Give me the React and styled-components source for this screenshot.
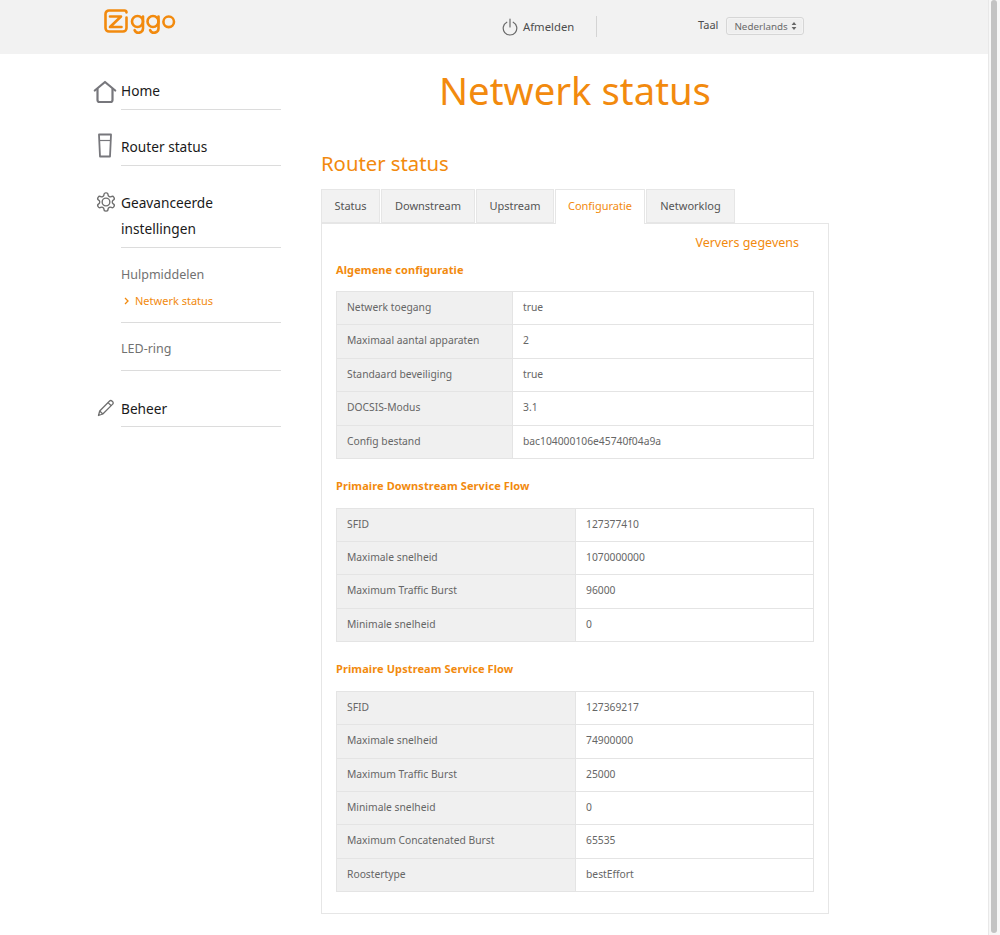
import React from "react";
import styled, { createGlobalStyle } from "styled-components";

const ORANGE = "#f28a0e";

const GlobalStyle = createGlobalStyle`
	html, body {
		margin: 0;
		padding: 0;
		background: #fff;
		overflow: hidden;
	}
	body {
		font-family: "Noto Sans", "Open Sans", sans-serif;
		color: #5a5a5a;
	}
`;

const Page = styled.div`
	position: relative;
	width: 1000px;
	height: 935px;
	overflow: hidden;
`;

const ScrollTrack = styled.div`
	position: absolute;
	top: 0;
	right: 0;
	width: 12px;
	height: 935px;
	background: #f7f7f7;
	border-left: 1px solid #e8e8e8;
	box-sizing: border-box;
`;

const ScrollThumb = styled.div`
	width: 6px;
	height: 933px;
	margin-left: 2px;
	border-radius: 3px;
	background: #c3c3c3;
`;

const Header = styled.header`
	display: flex;
	align-items: flex-start;
	height: 54px;
	background: #f2f2f2;
	padding-left: 104px;
`;

const LogoWrap = styled.div`
	width: 72px;
	height: 26px;
	margin-top: 9px;
`;

const LogoutGroup = styled.div`
	display: flex;
	align-items: center;
	margin-left: 326px;
	margin-top: 16px;
	height: 21px;
	width: 94px;
	border-right: 1px solid #d4d4d4;
	font-size: 11.3px;
	color: #4d4d4d;
	gap: 5px;
`;

const LangGroup = styled.div`
	display: flex;
	align-items: center;
	margin-left: 101px;
	margin-top: 17px;
	font-size: 11px;
	color: #4d4d4d;
	gap: 8px;
	height: 18px;
`;

const LangLabel = styled.span`
	margin-top: -3px;
`;

const LangSelect = styled.div`
	display: flex;
	align-items: center;
	justify-content: space-between;
	width: 78px;
	height: 18px;
	box-sizing: border-box;
	padding: 0 6px 0 7px;
	border: 1px solid #d6d6d6;
	border-radius: 3px;
	background: #efefef;
	box-shadow: inset 0 0 2px #fff;
	font-size: 9.8px;
	color: #6a6a6a;
`;

const Body = styled.div`
	display: flex;
	align-items: flex-start;
`;

const Sidebar = styled.nav`
	width: 188px;
	margin-left: 93px;
	padding-top: 23px;
`;

const NavItem = styled.div`
	display: flex;
	margin-bottom: ${(p) => p.$gap || 0}px;
	margin-top: ${(p) => p.$top || 0}px;
`;

const NavIcon = styled.div`
	width: 28px;
	flex-shrink: 0;
	box-sizing: border-box;
	padding: ${(p) => p.$y}px 0 0 ${(p) => p.$x}px;
	line-height: 0;
`;

const NavBody = styled.div`
	flex: 1;
	border-bottom: 1px solid #dcdcdc;
	font-size: 13.7px;
	line-height: 26px;
	color: #1a1a1a;
	padding: 1px 0 ${(p) => p.$bottom ?? 5}px;
`;

const SubItem = styled.div`
	margin-left: 28px;
	border-bottom: 1px solid #dcdcdc;
	padding: ${(p) => p.$top}px 0 ${(p) => p.$bottom}px;
	font-size: 12.5px;
	line-height: 20px;
	color: #717171;
`;

const SubLink = styled.div`
	display: flex;
	align-items: center;
	gap: 6px;
	padding: 6px 0 0 3px;
	font-size: 11px;
	line-height: 20px;
	color: ${ORANGE};
`;

const Main = styled.main`
	width: 508px;
	margin-left: 40px;
`;

const Title = styled.h1`
	margin: 13px 0 0;
	font-size: 38.3px;
	line-height: 46px;
	font-weight: 400;
	text-align: center;
	color: ${ORANGE};
`;

const SubTitle = styled.h2`
	margin: 35px 0 0;
	font-size: 20.3px;
	line-height: 30px;
	font-weight: 400;
	color: ${ORANGE};
`;

const Tabs = styled.div`
	display: flex;
	gap: 1px;
	margin-top: 11px;
	position: relative;
	z-index: 1;
`;

const Tab = styled.div`
	box-sizing: border-box;
	width: ${(p) => p.$width}px;
	height: ${(p) => (p.$active ? 35 : 34)}px;
	margin-bottom: ${(p) => (p.$active ? -1 : 0)}px;
	line-height: 32px;
	text-align: center;
	font-size: 11px;
	color: ${(p) => (p.$active ? ORANGE : "#555")};
	background: ${(p) => (p.$active ? "#fff" : "#f2f2f2")};
	border: 1px solid #e6e6e6;
	border-bottom: ${(p) => (p.$active ? "none" : "1px solid #e6e6e6")};
`;

const Panel = styled.section`
	box-sizing: border-box;
	height: 691px;
	padding: 0 14px;
	border: 1px solid #e6e6e6;
`;

const Refresh = styled.div`
	text-align: right;
	padding-right: 15px;
	margin-top: 9px;
	font-size: 12.5px;
	line-height: 20px;
	color: ${ORANGE};
`;

const SectionTitle = styled.h3`
	margin: ${(p) => p.$top}px 0 ${(p) => p.$bottom}px;
	font-size: 11px;
	letter-spacing: 0.1px;
	line-height: 16px;
	font-weight: 700;
	color: ${ORANGE};
`;

const Table = styled.div`
	border: 1px solid #e4e4e4;
	border-bottom: none;
`;

const Row = styled.div`
	display: grid;
	box-sizing: border-box;
	grid-template-columns: ${(p) => p.$label}px 1fr;
	height: ${(p) => p.$height}px;
	border-bottom: 1px solid #e4e4e4;
	font-size: 10.3px;
	line-height: 31px;
`;

const LabelCell = styled.div`
	background: #f0f0f0;
	padding-left: 10px;
	border-right: 1px solid #e4e4e4;
	color: #666;
`;

const ValueCell = styled.div`
	padding-left: 10px;
	color: #666;
`;

const ZiggoLogo = () => (
	<svg width="72" height="26" viewBox="0 0 72 26" fill="none" stroke={ORANGE} strokeWidth="2.6" strokeLinecap="round" strokeLinejoin="round">
		<path d="M22.5 3.4A2 2 0 0 0 20.5 1.5H5A3.5 3.5 0 0 0 1.5 5v14A3.5 3.5 0 0 0 5 22.5h14a3.5 3.5 0 0 0 3.5-3.5V8.5" />
		<path d="M6 7.5h11L6 18h11.5" />
		<circle cx="33.5" cy="12.5" r="5.5" />
		<path d="M39 7.5V19.5a4.4 4.4 0 0 1-8.4 1.6" />
		<circle cx="49" cy="12.5" r="5.5" />
		<path d="M54.5 7.5V19.5a4.4 4.4 0 0 1-8.4 1.6" />
		<circle cx="64.7" cy="12.8" r="5.3" />
	</svg>
);

const PowerIcon = () => (
	<svg width="16" height="18" viewBox="0 0 16 18" fill="none" stroke="#6a6a6a" strokeWidth="1.2" strokeLinecap="round">
		<path d="M8 1v8" />
		<path d="M4.8 4.2a6.8 6.8 0 1 0 6.4 0" />
	</svg>
);

const SelectArrows = () => (
	<svg width="6" height="10" viewBox="0 0 6 10" fill="#666">
		<path d="M3 1l2.4 3H.6z" />
		<path d="M3 9L.6 6h4.8z" />
	</svg>
);

const HomeIcon = () => (
	<svg width="24" height="24" viewBox="0 0 24 24" fill="none" stroke="#77777c" strokeWidth="2.2" strokeLinejoin="round">
		<path d="M1.8 10.5L12 2l10.2 8.5" strokeLinecap="round" />
		<path d="M4.5 8.5V20a2 2 0 0 0 2 2h11a2 2 0 0 0 2-2V8.5" />
	</svg>
);

const RouterIcon = () => (
	<svg width="16" height="25" viewBox="0 0 16 25" fill="none" stroke="#77777c" strokeLinejoin="round">
		<path d="M2 1.5h12v0.5l-1 21.5H3L2 2z" strokeWidth="1.8" />
		<path d="M2.4 7.5h11.2" strokeWidth="1.2" />
	</svg>
);

const GearIcon = () => (
	<svg width="22" height="22" viewBox="0 0 24 24" fill="none" stroke="#6f6f6f" strokeWidth="1.5" strokeLinejoin="round">
		<path d="M12.22 2h-.44a2 2 0 0 0-2 2v.18a2 2 0 0 1-1 1.73l-.43.25a2 2 0 0 1-2 0l-.15-.08a2 2 0 0 0-2.73.73l-.22.38a2 2 0 0 0 .73 2.73l.15.1a2 2 0 0 1 1 1.72v.51a2 2 0 0 1-1 1.74l-.15.09a2 2 0 0 0-.73 2.73l.22.38a2 2 0 0 0 2.73.73l.15-.08a2 2 0 0 1 2 0l.43.25a2 2 0 0 1 1 1.73V20a2 2 0 0 0 2 2h.44a2 2 0 0 0 2-2v-.18a2 2 0 0 1 1-1.73l.43-.25a2 2 0 0 1 2 0l.15.08a2 2 0 0 0 2.73-.73l.22-.39a2 2 0 0 0-.73-2.73l-.15-.08a2 2 0 0 1-1-1.74v-.5a2 2 0 0 1 1-1.74l.15-.09a2 2 0 0 0 .73-2.73l-.22-.38a2 2 0 0 0-2.73-.73l-.15.08a2 2 0 0 1-2 0l-.43-.25a2 2 0 0 1-1-1.73V4a2 2 0 0 0-2-2z" />
		<circle cx="12" cy="12" r="4.2" />
	</svg>
);

const PencilIcon = () => (
	<svg width="18" height="18" viewBox="0 0 18 18" fill="none" stroke="#6f6f6f" strokeWidth="1.3" strokeLinejoin="round">
		<path d="M1.5 16.5l1.2-4.5L12.6 2a1.6 1.6 0 0 1 2.3 0l.8.8a1.6 1.6 0 0 1 0 2.3L5.8 15z" />
		<path d="M2.7 12l3.1 3" />
		<path d="M11 3.6l3.3 3.2" />
	</svg>
);

const Chevron = () => (
	<svg width="5" height="8" viewBox="0 0 5 8" fill="none" stroke={ORANGE} strokeWidth="1.3">
		<path d="M1 1l3 3-3 3" />
	</svg>
);

const SECTIONS = [
	{
		title: "Algemene configuratie",
		top: 9,
		bottom: 13,
		label: 176,
		rowHeight: 33.4,
		rows: [
			["Netwerk toegang", "true"],
			["Maximaal aantal apparaten", "2"],
			["Standaard beveiliging", "true"],
			["DOCSIS-Modus", "3.1"],
			["Config bestand", "bac104000106e45740f04a9a"],
		],
	},
	{
		title: "Primaire Downstream Service Flow",
		top: 19,
		bottom: 14,
		label: 239,
		rowHeight: 33.25,
		rows: [
			["SFID", "127377410"],
			["Maximale snelheid", "1070000000"],
			["Maximum Traffic Burst", "96000"],
			["Minimale snelheid", "0"],
		],
	},
	{
		title: "Primaire Upstream Service Flow",
		top: 19,
		bottom: 14,
		label: 239,
		rowHeight: 33.33,
		rows: [
			["SFID", "127369217"],
			["Maximale snelheid", "74900000"],
			["Maximum Traffic Burst", "25000"],
			["Minimale snelheid", "0"],
			["Maximum Concatenated Burst", "65535"],
			["Roostertype", "bestEffort"],
		],
	},
];

const TABS = [
	{ name: "Status", width: 59 },
	{ name: "Downstream", width: 94 },
	{ name: "Upstream", width: 78 },
	{ name: "Configuratie", width: 90, active: true },
	{ name: "Networklog", width: 89 },
];

const App = () => (
	<Page>
		<GlobalStyle />
		<Header>
			<LogoWrap>
				<ZiggoLogo />
			</LogoWrap>
			<LogoutGroup>
				<PowerIcon />
				Afmelden
			</LogoutGroup>
			<LangGroup>
				<LangLabel>Taal</LangLabel>
				<LangSelect>
					Nederlands
					<SelectArrows />
				</LangSelect>
			</LangGroup>
		</Header>
		<Body>
			<Sidebar>
				<NavItem $gap={23}>
					<NavIcon $x={0} $y={3}>
						<HomeIcon />
					</NavIcon>
					<NavBody>Home</NavBody>
				</NavItem>
				<NavItem $gap={23}>
					<NavIcon $x={4} $y={0}>
						<RouterIcon />
					</NavIcon>
					<NavBody>Router status</NavBody>
				</NavItem>
				<NavItem>
					<NavIcon $x={2} $y={2}>
						<GearIcon />
					</NavIcon>
					<NavBody>
						Geavanceerde
						<br />
						instellingen
					</NavBody>
				</NavItem>
				<SubItem $top={17} $bottom={11}>
					Hulpmiddelen
					<SubLink>
						<Chevron />
						Netwerk status
					</SubLink>
				</SubItem>
				<SubItem $top={16} $bottom={11}>LED-ring</SubItem>
				<NavItem $top={24}>
					<NavIcon $x={4} $y={4}>
						<PencilIcon />
					</NavIcon>
					<NavBody $bottom={4}>Beheer</NavBody>
				</NavItem>
			</Sidebar>
			<Main>
				<Title>Netwerk status</Title>
				<SubTitle>Router status</SubTitle>
				<Tabs>
					{TABS.map((tab) => (
						<Tab key={tab.name} $width={tab.width} $active={tab.active}>
							{tab.name}
						</Tab>
					))}
				</Tabs>
				<Panel>
					<Refresh>Ververs gegevens</Refresh>
					{SECTIONS.map((section) => (
						<div key={section.title}>
							<SectionTitle $top={section.top} $bottom={section.bottom}>
								{section.title}
							</SectionTitle>
							<Table>
								{section.rows.map(([label, value]) => (
									<Row key={label} $label={section.label} $height={section.rowHeight}>
										<LabelCell>{label}</LabelCell>
										<ValueCell>{value}</ValueCell>
									</Row>
								))}
							</Table>
						</div>
					))}
				</Panel>
			</Main>
		</Body>
		<ScrollTrack>
			<ScrollThumb />
		</ScrollTrack>
	</Page>
);

export default App;
